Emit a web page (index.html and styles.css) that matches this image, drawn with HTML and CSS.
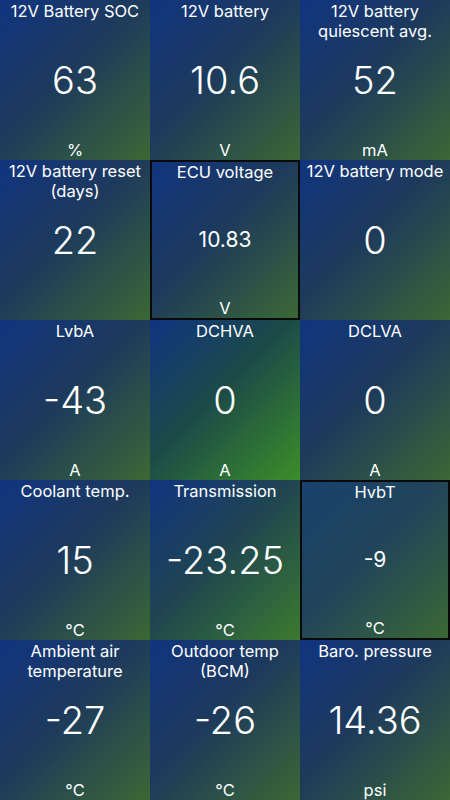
FILE: index.html
```html
<!DOCTYPE html>
<html lang="en">

<head>
	<meta charset="UTF-8">
	<meta name="viewport" content="width=device-width, initial-scale=1.0">
	<title>12V Battery</title>
	<link rel="stylesheet" href="styles.css">
</head>

<body>
	<div class="grid">
		<div class="tile">
			<div class="label">12V Battery SOC</div>
			<div class="value">63</div>
			<div class="unit">%</div>
		</div>
		<div class="tile">
			<div class="label">12V battery</div>
			<div class="value">10.6</div>
			<div class="unit">V</div>
		</div>
		<div class="tile">
			<div class="label">12V battery quiescent avg.</div>
			<div class="value">52</div>
			<div class="unit">mA</div>
		</div>

		<div class="tile">
			<div class="label">12V battery reset (days)</div>
			<div class="value">22</div>
			<div class="unit"></div>
		</div>
		<div class="tile tile-selected">
			<div class="label">ECU voltage</div>
			<div class="value">10.83</div>
			<div class="unit">V</div>
		</div>
		<div class="tile">
			<div class="label">12V battery mode</div>
			<div class="value">0</div>
			<div class="unit"></div>
		</div>

		<div class="tile">
			<div class="label">LvbA</div>
			<div class="value">-43</div>
			<div class="unit">A</div>
		</div>
		<div class="tile tile-bright">
			<div class="label">DCHVA</div>
			<div class="value">0</div>
			<div class="unit">A</div>
		</div>
		<div class="tile">
			<div class="label">DCLVA</div>
			<div class="value">0</div>
			<div class="unit">A</div>
		</div>

		<div class="tile">
			<div class="label">Coolant temp.</div>
			<div class="value">15</div>
			<div class="unit">°C</div>
		</div>
		<div class="tile tile-green">
			<div class="label">Transmission</div>
			<div class="value">-23.25</div>
			<div class="unit">°C</div>
		</div>
		<div class="tile tile-selected tile-teal">
			<div class="label">HvbT</div>
			<div class="value">-9</div>
			<div class="unit">°C</div>
		</div>

		<div class="tile">
			<div class="label">Ambient air temperature</div>
			<div class="value">-27</div>
			<div class="unit">°C</div>
		</div>
		<div class="tile">
			<div class="label">Outdoor temp (BCM)</div>
			<div class="value">-26</div>
			<div class="unit">°C</div>
		</div>
		<div class="tile">
			<div class="label">Baro. pressure</div>
			<div class="value">14.36</div>
			<div class="unit">psi</div>
		</div>
	</div>
</body>

</html>
```

FILE: styles.css
```css
html,
body {
	margin: 0;
	padding: 0;
}

body {
	background-color: #1b3a5c;
	font-family: Inter, 'Liberation Sans', sans-serif;
	color: #fff;
}

.grid {
	display: grid;
	grid-template-columns: repeat(3, 150px);
	grid-template-rows: repeat(5, 160px);
	width: 450px;
	height: 800px;
}

.tile {
	box-sizing: border-box;
	display: grid;
	grid-template-rows: 1fr auto 1fr;
	text-align: center;
	background: linear-gradient(135deg, #113480 0%, #1d3a5c 45%, #3b6834 100%);
	padding: 0 4px;
}

.tile-bright {
	background: linear-gradient(135deg, #103482 0%, #1c4a48 45%, #3b8e28 100%);
}

.tile-green {
	background: linear-gradient(135deg, #113480 0%, #1f4452 45%, #3b7a2e 100%);
}

.tile-selected {
	border: 2px solid #0a0a0a;
}

.tile-teal {
	background: linear-gradient(135deg, #18426e 0%, #21445a 45%, #3b6834 100%);
}

.label {
	align-self: start;
	font-size: 16.5px;
	line-height: 20px;
	padding-top: 1px;
}

.tile-selected .label {
	padding-top: 0;
}

.value {
	font-size: 38px;
	line-height: 44px;
	font-weight: 300;
}

.tile-selected .value {
	font-size: 21px;
	font-weight: 400;
}

.unit {
	align-self: end;
	font-size: 16.5px;
	line-height: 20px;
}
```
